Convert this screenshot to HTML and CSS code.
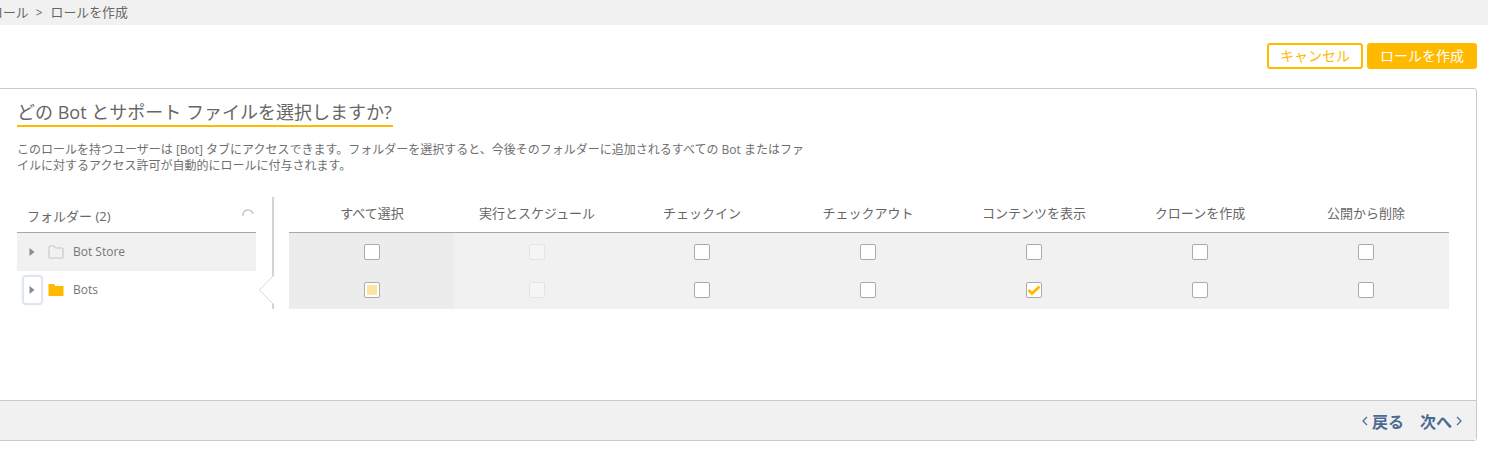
FILE: index.html
```html
<!DOCTYPE html>
<html lang="ja">
<head>
<meta charset="utf-8">
<title>ロールを作成</title>
<link rel="stylesheet" href="styles.css">
</head>
<body>
<div class="crumbs"><span class="crumb-text">ロール</span><span class="crumb-sep">&gt;</span><span class="crumb-current">ロールを作成</span></div>
<div class="actions">
  <button class="btn btn-outline">キャンセル</button>
  <button class="btn btn-solid">ロールを作成</button>
</div>
<section class="card">
  <div class="card-body">
    <h2 class="title">どの Bot とサポート ファイルを選択しますか?</h2>
    <p class="desc">このロールを持つユーザーは [Bot] タブにアクセスできます。フォルダーを選択すると、今後そのフォルダーに追加されるすべての Bot またはファイルに対するアクセス許可が自動的にロールに付与されます。</p>
    <div class="picker">
      <div class="tree">
        <div class="tree-head"><span>フォルダー (2)</span>
          <svg class="spinner" width="12" height="8" viewBox="0 0 12 8"><path d="M1 7 A5 5 0 0 1 11 5" fill="none" stroke="#c4c4c4" stroke-width="1.4"/></svg>
        </div>
        <div class="tree-row tree-row-active">
          <span class="caret-box"><svg width="6" height="8" viewBox="0 0 6 8"><path d="M0.5 0 L5.5 4 L0.5 8 Z" fill="#8a8a8a"/></svg></span>
          <svg class="folder" width="16" height="14" viewBox="0 0 16 14"><path d="M1 12.2 V2 Q1 1 2 1 H6 L7.5 3 H14 Q15 3 15 4 V12.2 Q15 13 14 13 H2 Q1 13 1 12.2 Z" fill="none" stroke="#c9c4c0" stroke-width="1.1"/></svg>
          <span class="tree-label">Bot Store</span>
        </div>
        <div class="tree-row">
          <span class="caret-box caret-focus"><svg width="6" height="8" viewBox="0 0 6 8"><path d="M0.5 0 L5.5 4 L0.5 8 Z" fill="#8a8a8a"/></svg></span>
          <svg class="folder" width="16" height="14" viewBox="0 0 16 14"><path d="M0.5 13 V1.5 Q0.5 1 1 1 H6 L7.5 3 H15.5 V13 Z" fill="#ffba00"/></svg>
          <span class="tree-label">Bots</span>
        </div>
      </div>
      <div class="splitter">
        <svg class="notch" width="16" height="28" viewBox="0 0 16 28"><path d="M15 0.5 L2 14 L15 27.5 L16 27.5 L16 0.5 Z" fill="#fff"/><path d="M14 1 L1.5 14 L14 27" fill="none" stroke="#d8d8d8" stroke-width="1"/></svg>
      </div>
      <div class="perm">
        <div class="perm-head">
          <div>すべて選択</div><div>実行とスケジュール</div><div>チェックイン</div><div>チェックアウト</div><div>コンテンツを表示</div><div>クローンを作成</div><div>公開から削除</div>
        </div>
        <div class="perm-row">
          <div class="cell cell-first"><span class="box"></span></div>
          <div class="cell"><span class="box box-off"></span></div>
          <div class="cell"><span class="box"></span></div>
          <div class="cell"><span class="box"></span></div>
          <div class="cell"><span class="box"></span></div>
          <div class="cell"><span class="box"></span></div>
          <div class="cell"><span class="box"></span></div>
        </div>
        <div class="perm-row">
          <div class="cell cell-first"><span class="box box-mixed"></span></div>
          <div class="cell"><span class="box box-off"></span></div>
          <div class="cell"><span class="box"></span></div>
          <div class="cell"><span class="box"></span></div>
          <div class="cell"><span class="box"><svg width="14" height="12" viewBox="0 0 14 12"><path d="M1.5 6 L5 9.5 L12.5 2.5" fill="none" stroke="#ffba00" stroke-width="2.8"/></svg></span></div>
          <div class="cell"><span class="box"></span></div>
          <div class="cell"><span class="box"></span></div>
        </div>
      </div>
    </div>
  </div>
  <footer class="card-foot">
    <a class="nav"><svg width="6" height="10" viewBox="0 0 6 10"><path d="M5 1 L1 5 L5 9" fill="none" stroke="#4a6a94" stroke-width="1.2"/></svg>戻る</a>
    <a class="nav">次へ<svg width="6" height="10" viewBox="0 0 6 10"><path d="M1 1 L5 5 L1 9" fill="none" stroke="#4a6a94" stroke-width="1.2"/></svg></a>
  </footer>
</section>
</body>
</html>
```
FILE: styles.css
```css
* { box-sizing: border-box; }
html, body { margin: 0; padding: 0; }
body {
  height: 467px;
  overflow: hidden;
  background: #fff;
  color: #6f6f6f;
  font-family: "Open Sans", "Noto Sans CJK JP", sans-serif;
  font-size: 13px;
}
.crumbs {
  height: 25px;
  background: #f1f1f1;
  display: flex;
  align-items: center;
  gap: 7px;
  color: #666;
  font-size: 12.9px;
  line-height: 1;
}
.crumb-text { margin-left: -10px; }
.crumb-sep { font-size: 12px; }
.crumb-current { margin-left: 1px; }
.actions {
  display: flex;
  justify-content: flex-end;
  gap: 4px;
  padding: 18px 11px 0 0;
  height: 63px;
}
.btn {
  width: 96px;
  height: 26px;
  border-radius: 3px;
  border: 2px solid #ffba00;
  font: inherit;
  font-size: 14px;
  line-height: 1;
  padding: 0;
}
.btn-outline { background: #fff; color: #ffba00; }
.btn-solid { background: #ffba00; color: #fff; width: 110px; }
.card {
  margin-left: -4px;
  width: 1481px;
  height: 353px;
  border: 1px solid #cacaca;
  border-radius: 3px;
  display: flex;
  flex-direction: column;
}
.card-body { flex: 1; padding: 10px 0 0 20px; }
.title {
  display: block;
  margin: 0;
  font-size: 18px;
  font-weight: 400;
  line-height: 26px;
  height: 28px;
  color: #666;
  border-bottom: 2px solid #ffba00;
  width: 376px;
  white-space: nowrap;
}
.desc {
  width: 792px;
  height: 32px;
  margin: 15px 0 23px;
  font-size: 12px;
  line-height: 15.5px;
  color: #6f6f6f;
}
.picker { display: flex; }
.tree { width: 239px; }
.tree-head {
  height: 36px;
  border-bottom: 1px solid #a8a8a8;
  display: flex;
  align-items: center;
  justify-content: space-between;
  padding: 1px 2px 0 10px;
  color: #666;
}
.spinner { margin-top: -4px; }
.tree-row {
  height: 38px;
  display: flex;
  align-items: center;
  font-size: 12px;
  color: #777;
}
.tree-row-active { background: #f1f1f1; }
.caret-box {
  width: 21px;
  height: 30px;
  margin: 0 5px 0 5px;
  padding-right: 2px;
  display: flex;
  align-items: center;
  justify-content: center;
}
.caret-focus {
  border: 2px solid #dfe6ee;
  border-radius: 4px;
  box-shadow: 0 0 2px #e6ebf2;
}
.folder { flex: none; }
.tree-label { margin: -2px 0 0 9px; }
.splitter {
  position: relative;
  width: 2px;
  height: 112px;
  margin: 0 15px 0 16px;
  background: #d4d4d4;
  flex: none;
}
.notch {
  position: absolute;
  left: -14px;
  top: 79px;
}
.perm { width: 1160px; }
.perm-head {
  display: grid;
  grid-template-columns: 166px 164px repeat(5, 166px);
  height: 36px;
  border-bottom: 1px solid #a8a8a8;
  color: #666;
  text-align: center;
  line-height: 33px;
}
.perm-row {
  display: grid;
  grid-template-columns: 166px 164px repeat(5, 166px);
  height: 38px;
  background: #f1f1f1;
}
.cell { display: flex; align-items: center; justify-content: center; }
.cell-first { background: #ececec; margin-right: 1px; }
.box {
  width: 16px;
  height: 16px;
  border: 1px solid #aaa;
  border-radius: 2px;
  background: #fff;
  display: flex;
  align-items: center;
  justify-content: center;
}
.box-off { background: #f5f5f5; border-color: #e4e4e4; }
.box-mixed::after {
  content: "";
  width: 10px;
  height: 10px;
  background: #ffe4a0;
}
.card-foot {
  height: 40px;
  flex: none;
  background: #f1f1f1;
  border-top: 1px solid #cacaca;
  display: flex;
  align-items: center;
  justify-content: flex-end;
  gap: 16px;
  padding-right: 14px;
}
.nav {
  display: flex;
  align-items: center;
  gap: 4px;
  color: #4a6a94;
  font-size: 16px;
  font-weight: 700;
}
```
